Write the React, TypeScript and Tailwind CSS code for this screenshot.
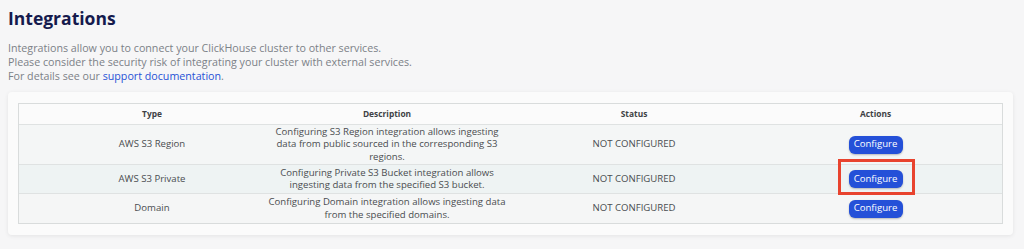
import React from "react";

interface Integration {
    type: string;
    description: string[];
    status: string;
    rowClass: string;
    highlighted?: boolean;
}

const INTEGRATIONS: Integration[] = [
    {
        type: "AWS S3 Region",
        description: [
            "Configuring S3 Region integration allows ingesting",
            "data from public sourced in the corresponding S3",
            "regions.",
        ],
        status: "NOT CONFIGURED",
        rowClass: "h-[40px] bg-[#f4f6f6]",
    },
    {
        type: "AWS S3 Private",
        description: [
            "Configuring Private S3 Bucket integration allows",
            "ingesting data from the specified S3 bucket.",
        ],
        status: "NOT CONFIGURED",
        rowClass: "h-[29px] bg-[#eef3f3]",
        highlighted: true,
    },
    {
        type: "Domain",
        description: [
            "Configuring Domain integration allows ingesting data",
            "from the specified domains.",
        ],
        status: "NOT CONFIGURED",
        rowClass: "h-[30px] bg-[#f5f6f6]",
    },
];

const COLS = "grid grid-cols-[246px_244px_250px_1fr]";

export default function App() {
    return (
        <div
            className="h-[249px] w-[1024px] bg-[#f6f6f7] px-2 pt-[6px] text-[#6f747a]"
            style={{ fontFamily: '"Open Sans", "Liberation Sans", sans-serif' }}
        >
            {/* Title */}
            <h1 className="text-[17.5px] font-bold leading-[24px] text-[#151a4d]">Integrations</h1>

            {/* Intro */}
            <div className="mt-[11px] text-[10.7px] leading-[14px] text-[#7c8187]">
                <p>Integrations allow you to connect your ClickHouse cluster to other services.</p>
                <p>Please consider the security risk of integrating your cluster with external services.</p>
                <p>
                    For details see our <a className="text-[#2852d6]">support documentation</a>.
                </p>
            </div>

            {/* Card */}
            <div className="mt-[9px] w-[1005px] rounded-[4px] bg-[#fbfbfb] px-[10px] pt-[11px] pb-[11px] shadow-[0_1px_4px_rgba(0,0,0,0.08)]">
                <div className="border border-[#d9dcdc] text-[9.6px] text-[#4a4d50]">
                    {/* Header */}
                    <div className={`${COLS} h-[20px] items-center bg-[#fbfbfb] text-[8.4px] font-bold text-[#3f4245]`}>
                        <div className="pl-[20px] text-center">Type</div>
                        <div className="text-center">Description</div>
                        <div className="text-center">Status</div>
                        <div className="pr-[10px] text-center">Actions</div>
                    </div>

                    {/* Rows */}
                    {INTEGRATIONS.map((item) => (
                        <div
                            key={item.type}
                            className={`${COLS} ${item.rowClass} items-center border-t border-[#dfe2e2]`}
                        >
                            <div className="pl-[20px] text-center">{item.type}</div>
                            <div className="whitespace-nowrap text-center leading-[12.5px]">
                                {item.description.map((line) => (
                                    <div key={line}>{line}</div>
                                ))}
                            </div>
                            <div className="text-center">{item.status}</div>
                            <div className="flex justify-center pr-[10px]">
                                <div className="relative">
                                    <button className="h-[18px] w-[54px] rounded-[6px] bg-[#2450d8] text-[9.6px] text-white shadow-[0_1px_2px_rgba(0,0,0,0.25)]">
                                        Configure
                                    </button>
                                    {item.highlighted && (
                                        <div className="absolute -left-[11px] -top-[11px] h-[36px] w-[77px] border-[3px] border-[#e8432e]" />
                                    )}
                                </div>
                            </div>
                        </div>
                    ))}
                </div>
            </div>
        </div>
    );
}
